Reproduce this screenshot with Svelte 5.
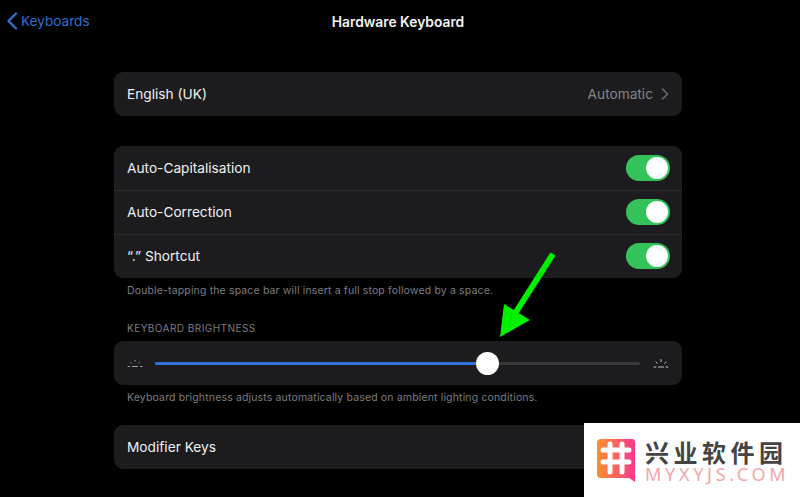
<script>
  const toggles = ['Auto-Capitalisation', 'Auto-Correction', '“.” Shortcut'];
</script>

<div class="page">
  <header class="nav">
    <div class="back">
      <svg width="12" height="18" viewBox="0 0 12 18"><path d="M10 1.5 2.5 9l7.5 7.5" fill="none" stroke="#2f6fd0" stroke-width="2.4" stroke-linecap="round" stroke-linejoin="round"/></svg>
      <span>Keyboards</span>
    </div>
    <h1>Hardware Keyboard</h1>
  </header>

  <main class="content">
    <section class="group">
      <div class="row text">
        <span>English (UK)</span>
        <div class="value">
          <span>Automatic</span>
          <svg width="8" height="12" viewBox="0 0 8 12"><path d="M1.5 1 6.5 6l-5 5" fill="none" stroke="#6a6a6e" stroke-width="1.6" stroke-linecap="round" stroke-linejoin="round"/></svg>
        </div>
      </div>
    </section>

    <section class="group second">
      {#each toggles as t}
        <div class="row text divided">
          <span>{t}</span>
          <div class="toggle"><div class="knob"></div></div>
        </div>
      {/each}
    </section>
    <p class="foot">Double-tapping the space bar will insert a full stop followed by a space.</p>

    <h2>KEYBOARD BRIGHTNESS</h2>
    <section class="group">
      <div class="row slider-row">
        <svg class="sun" width="16" height="12" viewBox="0 0 16 12"><g stroke="#a8a8aa" stroke-width="1" stroke-linecap="round"><path d="M1 9.5h1.5M5.5 9.5h5M13.5 9.5H15M3.5 5.5l.6.6M8 3.5v.6M12.5 5.5l-.6.6"/></g></svg>
        <div class="track">
          <div class="fill"></div>
          <div class="thumb"></div>
        </div>
        <svg class="sun" width="16" height="12" viewBox="0 0 16 12"><g stroke="#c4c4c6" stroke-width="1" stroke-linecap="round"><path d="M1 10h2M5.5 10h5M13 10h2M3 5l1.3 1.3M8 2.5v2.2M13 5l-1.3 1.3"/></g></svg>
      </div>
    </section>
    <p class="foot">Keyboard brightness adjusts automatically based on ambient lighting conditions.</p>

    <section class="group modifier">
      <div class="row text"><span>Modifier Keys</span></div>
    </section>
  </main>

  <svg class="arrow" width="800" height="497" viewBox="0 0 800 497">
    <path d="M553 254 516 312" stroke="#00f000" stroke-width="6" fill="none"/>
    <path d="M500 337 504 304 530 320Z" fill="#00f000"/>
  </svg>

  <aside class="mark">
    <svg class="logo" width="38" height="43" viewBox="0 0 38 43">
      <defs><linearGradient id="lg" x1="0" y1="0" x2="1" y2="0"><stop offset="0" stop-color="#fb8f2e"/><stop offset="1" stop-color="#f8388f"/></linearGradient></defs>
      <path d="M4 0h31a3 3 0 0 1 3 3v40l-6-4H4a4 4 0 0 1-4-4V4a4 4 0 0 1 4-4Z" fill="url(#lg)"/>
      <path d="M13 5v28M25 5v28M6 11h26M6 23h26" stroke="#fff" stroke-width="5" stroke-linecap="round" fill="none"/>
    </svg>
    <div class="brand">
      <div class="cn">兴业软件园</div>
      <div class="en">MYXYJS.COM</div>
    </div>
  </aside>
</div>

<style>
  :global(body) { margin: 0; background: #000; }
  .page {
    position: relative;
    width: 800px;
    height: 497px;
    overflow: hidden;
    background: #000;
    color: #f0f0f2;
    font-family: Inter, "Noto Sans", sans-serif;
    font-size: 13.7px;
  }
  .nav {
    position: relative;
    height: 43px;
    padding-right: 4px;
    box-sizing: border-box;
    display: flex;
    align-items: center;
    justify-content: center;
  }
  .nav h1 { margin: 0; font-size: 13.8px; font-weight: 600; color: #f4f4f6; }
  .back {
    position: absolute;
    left: 6px;
    top: 12px;
    display: flex;
    align-items: center;
    gap: 3px;
    color: #2f6fd0;
    font-size: 13.6px;
  }
  .content { width: 568px; margin: 29px 0 0 114px; }
  .group { background: #1c1c1e; border-radius: 9px; overflow: hidden; }
  .second { margin-top: 30px; }
  .modifier { margin-top: 16px; }
  .row {
    height: 44px;
    box-sizing: border-box;
    padding: 0 13px;
    display: flex;
    align-items: center;
    justify-content: space-between;
  }
  .row.text { padding-bottom: 1px; }
  .divided + .divided { box-shadow: inset 0 1px 0 #2c2c2e; }
  .value { display: flex; align-items: center; gap: 8px; color: #858588; }
  .toggle {
    width: 44px;
    height: 26px;
    border-radius: 13px;
    background: #34c25a;
    position: relative;
    margin-right: -1px;
  }
  .knob {
    position: absolute;
    right: 2px;
    top: 2px;
    width: 22px;
    height: 22px;
    border-radius: 50%;
    background: #fff;
  }
  .foot {
    margin: 0;
    height: 19px;
    padding: 5px 13px 0;
    font-size: 10.5px;
    line-height: 16px;
    color: #7d7d81;
    letter-spacing: .15px;
  }
  h2 {
    margin: 18px 0 0;
    padding: 0 13px;
    height: 16px;
    font-size: 10px;
    line-height: 16px;
    font-weight: 400;
    color: #7d7d81;
    letter-spacing: .45px;
  }
  h2 + .group { margin-top: 5px; }
  .slider-row { gap: 11px; }
  .sun { flex: none; }
  .track {
    flex: 1;
    height: 3px;
    border-radius: 2px;
    background: #3a3a3c;
    position: relative;
    margin: 0 2px 0 1px;
  }
  .fill {
    width: 68.5%;
    height: 100%;
    border-radius: 2px;
    background: #2f73d8;
  }
  .thumb {
    position: absolute;
    left: 68.5%;
    top: 50%;
    width: 23px;
    height: 23px;
    margin: -11.5px 0 0 -11.5px;
    border-radius: 50%;
    background: #fff;
  }
  .arrow { position: absolute; left: 0; top: 0; pointer-events: none; }
  .mark {
    position: absolute;
    left: 584px;
    top: 423px;
    width: 216px;
    height: 74px;
    background: #fff;
    display: flex;
    align-items: flex-start;
    padding: 16px 0 0 13px;
    box-sizing: border-box;
    gap: 10px;
  }
  .logo { flex: none; }
  .brand { display: flex; flex-direction: column; }
  .cn {
    font-family: "Noto Sans CJK SC", sans-serif;
    font-size: 24px;
    line-height: 25px;
    font-weight: 700;
    color: #444;
    letter-spacing: 4.5px;
    white-space: nowrap;
  }
  .en {
    font-family: "Noto Sans", sans-serif;
    font-size: 18px;
    line-height: 20px;
    color: #f4a5ab;
    letter-spacing: 3.7px;
    white-space: nowrap;
  }
</style>
